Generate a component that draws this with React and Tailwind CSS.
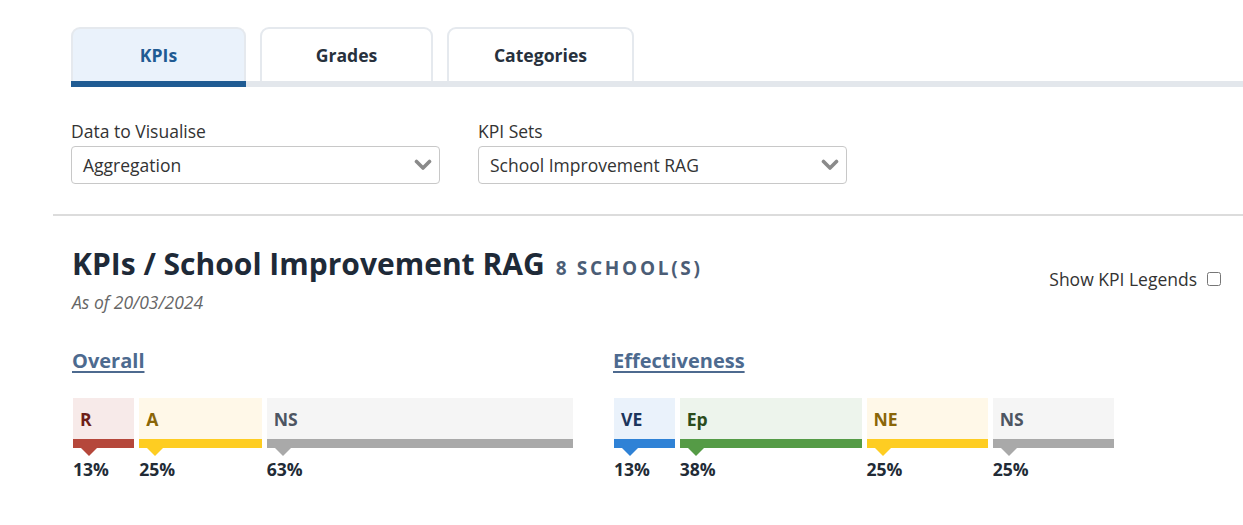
const overall = [
    { key: 'R', pct: 12.5, label: '13%', bg: 'bg-[#f7eae9]', bar: 'bg-[#b5473b]', tri: 'border-t-[#b5473b]', text: 'text-[#6e1f18]' },
    { key: 'A', pct: 25, label: '25%', bg: 'bg-[#fff8e8]', bar: 'bg-[#fecd22]', tri: 'border-t-[#fecd22]', text: 'text-[#8a6608]' },
    { key: 'NS', pct: 62.5, label: '63%', bg: 'bg-[#f5f5f5]', bar: 'bg-[#a9a9a9]', tri: 'border-t-[#a9a9a9]', text: 'text-[#4d5562]' },
];

const effectiveness = [
    { key: 'VE', pct: 12.5, label: '13%', bg: 'bg-[#eaf2fb]', bar: 'bg-[#2f82d6]', tri: 'border-t-[#2f82d6]', text: 'text-[#1c355c]' },
    { key: 'Ep', pct: 37.5, label: '38%', bg: 'bg-[#edf4ec]', bar: 'bg-[#559b46]', tri: 'border-t-[#559b46]', text: 'text-[#2c4c1c]' },
    { key: 'NE', pct: 25, label: '25%', bg: 'bg-[#fff8e8]', bar: 'bg-[#fecd22]', tri: 'border-t-[#fecd22]', text: 'text-[#8a6608]' },
    { key: 'NS', pct: 25, label: '25%', bg: 'bg-[#f5f5f5]', bar: 'bg-[#a9a9a9]', tri: 'border-t-[#a9a9a9]', text: 'text-[#4d5562]' },
];

function Tab({ label, active, width }) {
    return (
        <div
            className={`${width} h-[54px] flex items-center justify-center rounded-t-[9px] border-2 border-b-0 border-[#e5e9ee] text-[17.6px] font-bold ${active
                    ? 'bg-[#eaf2fb] text-[#1f5b93]'
                    : 'bg-white text-[#27313d]'
                }`}
        >
            {label}
        </div>
    );
}

function Chevron() {
    return (
        <svg width="18" height="12" viewBox="0 0 18 12" className="text-[#8a8a8a]">
            <path d="M2.5 2.5 L9 9 L15.5 2.5" fill="none" stroke="currentColor" strokeWidth="3.6" strokeLinecap="round" strokeLinejoin="round" />
        </svg>
    );
}

function Select({ label, value }) {
    return (
        <div className="flex flex-col w-[369px]">
            <label className="text-[17.5px] text-[#333] leading-[22px] mb-[4px]">{label}</label>
            <div className="h-[38px] border border-[#c8c8c8] rounded-[4px] flex items-center justify-between pl-[11px] pr-[7px] text-[17.5px] text-[#333]">
                <span>{value}</span>
                <Chevron />
            </div>
        </div>
    );
}

function RagBar({ title, items }) {
    return (
        <div className="w-[501px]">
            <div className="leading-[30px]">
                <a href="#" className="text-[20px] font-bold text-[#4d6a8f] underline underline-offset-[3px] decoration-[2px]">{title}</a>
            </div>
            <div className="flex gap-[5px] mt-[21px] pl-[1px]">
                {items.map(item => (
                    <div key={item.key} style={{ width: item.pct + '%' }} className="min-w-0">
                        <div className={`${item.bg} h-[41px] flex items-center pl-[7px] pt-[2px] text-[17.6px] font-bold ${item.text}`}>
                            {item.key}
                        </div>
                        <div className={`${item.bar} h-[9px]`} />
                        <div className={`ml-[8px] w-0 h-0 border-l-[8px] border-r-[8px] border-t-[8px] border-l-transparent border-r-transparent ${item.tri}`} />
                        <div className="text-[17.6px] font-bold text-[#222b36] leading-[22px] mt-[2px]">{item.label}</div>
                    </div>
                ))}
            </div>
        </div>
    );
}

export default function App() {
    return (
        <div className="w-[1243px] h-[525px] bg-white pl-[53px] pt-[27px] overflow-hidden" style={{ fontFamily: '"Open Sans", sans-serif' }}>
            {/* Tabs */}
            <div className="pl-[18px]">
                <div className="flex gap-[14px]">
                    <Tab label="KPIs" active width="w-[175px]" />
                    <Tab label="Grades" width="w-[173px]" />
                    <Tab label="Categories" width="w-[187px]" />
                </div>
                <div className="flex h-[6px]">
                    <div className="w-[175px] bg-[#1f5b93]" />
                    <div className="flex-1 bg-[#e3e7ec]" />
                </div>

                {/* Filters */}
                <div className="flex gap-[38px] mt-[33px]">
                    <Select label="Data to Visualise" value="Aggregation" />
                    <Select label="KPI Sets" value="School Improvement RAG" />
                </div>
            </div>

            <div className="h-[2px] bg-[#dcdcdc] mt-[30px]" />

            {/* Header */}
            <div className="pl-[19px] pr-[22px] mt-[28px] flex items-center justify-between">
                <div>
                    <div className="flex items-baseline gap-[11px]">
                        <h1 className="text-[30px] font-bold text-[#1e2a38] leading-[40px]">KPIs / School Improvement RAG</h1>
                        <span className="text-[19px] font-bold tracking-[2.7px] text-[#4b5d76] uppercase">8 School(s)</span>
                    </div>
                    <div className="text-[17.5px] italic text-[#666] leading-[24px] mt-[6px]">As of 20/03/2024</div>
                </div>
                <label className="flex items-center gap-[10px] text-[17.5px] text-[#333]">
                    Show KPI Legends
                    <input type="checkbox" className="w-[14px] h-[14px]" />
                </label>
            </div>

            {/* Bars */}
            <div className="pl-[19px] mt-[32px] flex gap-[40px]">
                <RagBar title="Overall" items={overall} />
                <RagBar title="Effectiveness" items={effectiveness} />
            </div>
        </div>
    );
}
